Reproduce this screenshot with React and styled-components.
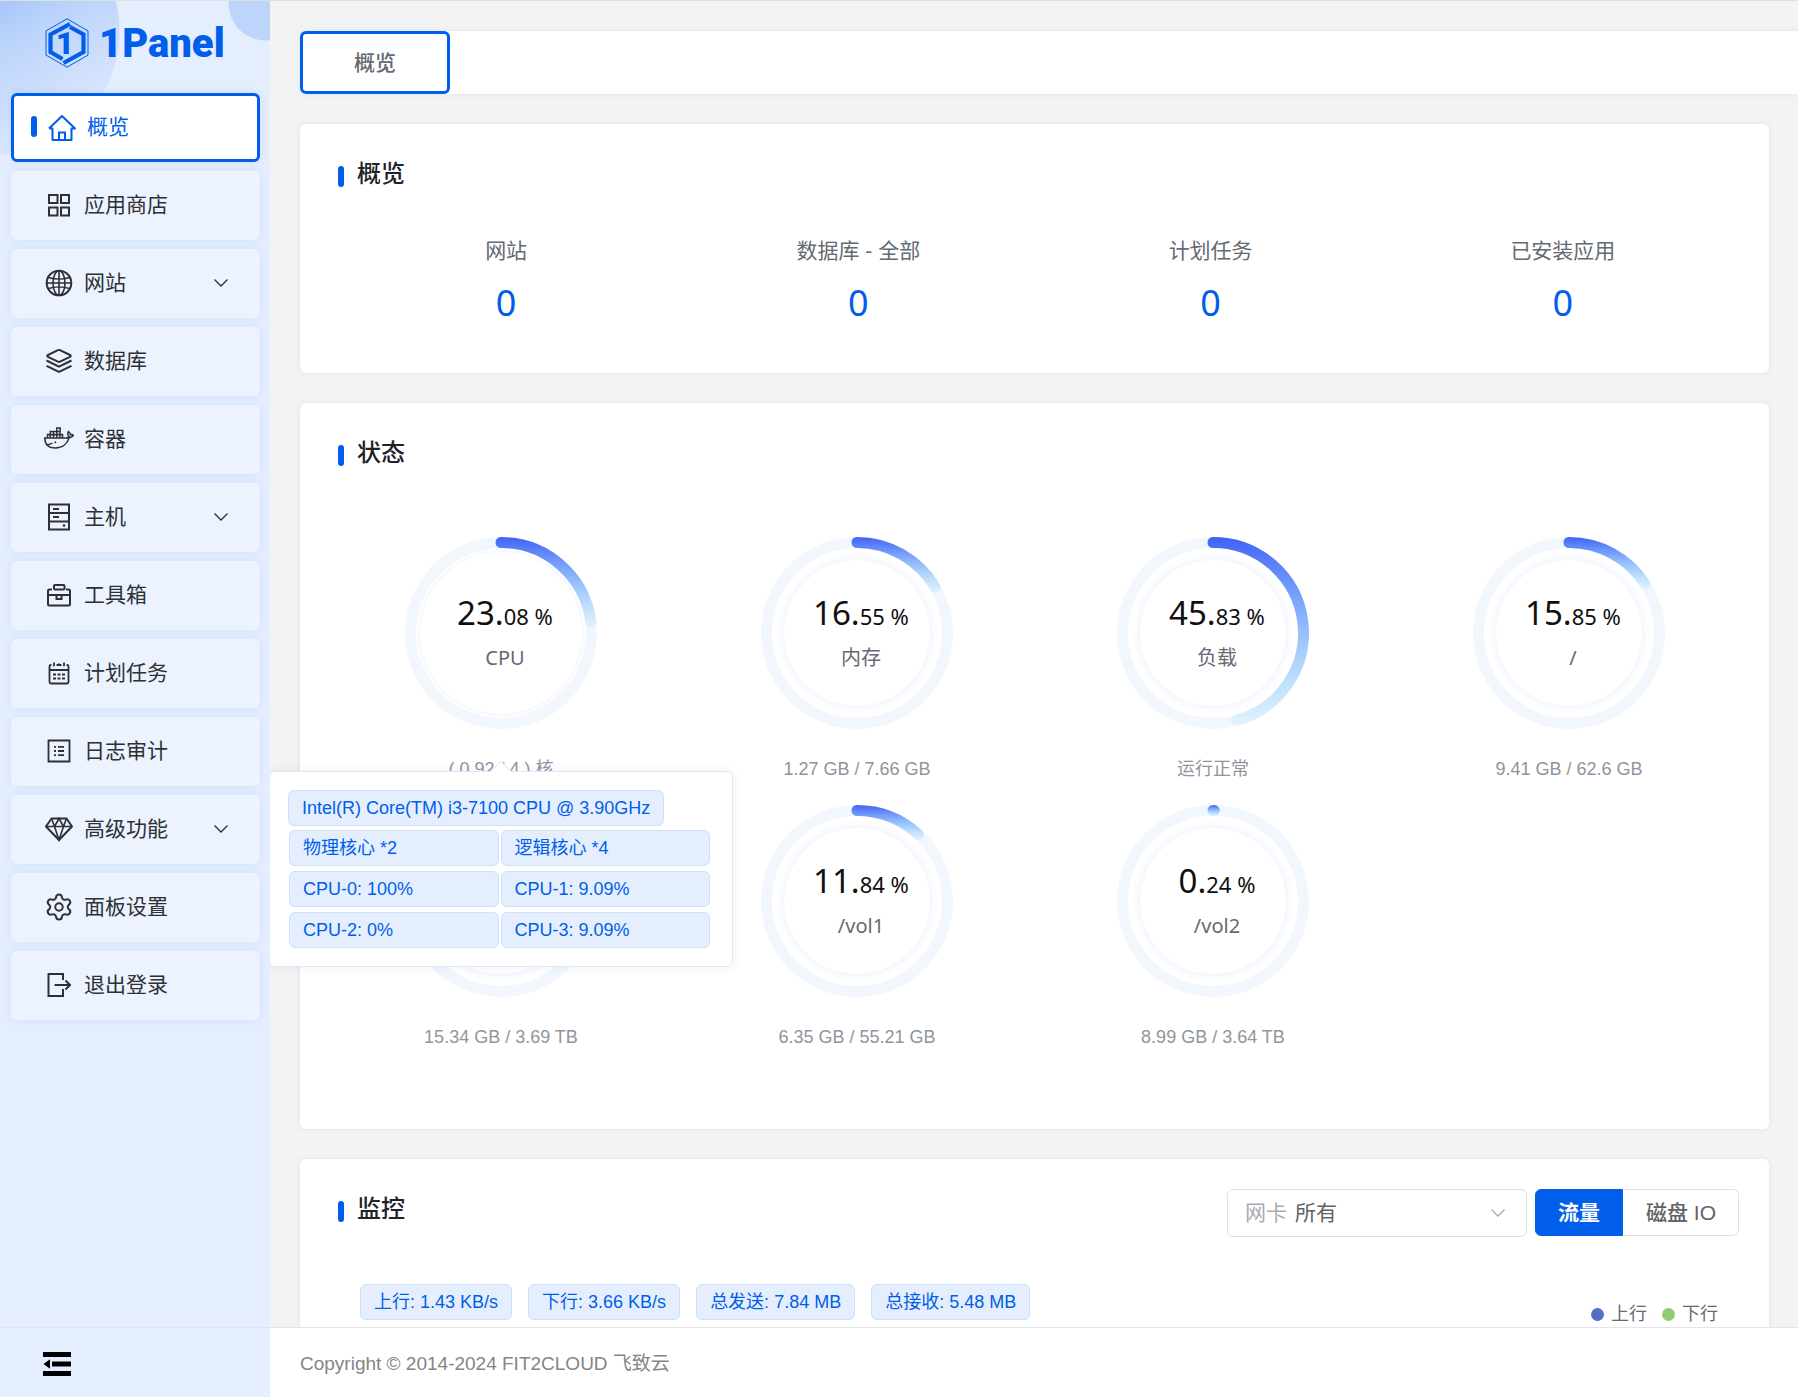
import React, { useState } from 'react';
import styled, { createGlobalStyle, css } from 'styled-components';
import { Settings } from 'lucide-react';

const GlobalStyle = createGlobalStyle`
  :root {
    --primary: #005eeb;
    --tag: #e5eefd;
    --tagBorder: #ccdffb;
    --text: #1f2329;
    --regular: #646a73;
    --muted: #8f959e;
    --line: #e1e4ec;
  }
  * {
    box-sizing: border-box;
  }
  body {
    margin: 0;
    color: var(--text);
    font-family: 'Liberation Sans', 'Noto Sans CJK SC', sans-serif;
    font-size: 18px;
    line-height: 24px;
  }
  button,
  select {
    font-family: inherit;
    line-height: inherit;
  }
`;

/* ---------- icons ---------- */

const IconSvg = ({ children, width = 2 }) => (
  <svg
    width='30'
    height='30'
    viewBox='0 0 30 30'
    fill='none'
    stroke='currentColor'
    strokeWidth={width}
    aria-hidden='true'
  >
    {children}
  </svg>
);

const HomeIcon = () => (
  <IconSvg>
    <path d='M2 16.500 15 4l13 12.500H24.500V28h-19V16.500H2' strokeLinejoin='round' />
    <path d='M12 28v-7.500h6V28' />
  </IconSvg>
);

const AppIcon = () => (
  <IconSvg>
    <path d='M5 5h8.500v8H5zM17 5h8v8h-8zM5 17.500h8.500v8H5zM17 17.500h8v8h-8z' />
  </IconSvg>
);

const GlobeIcon = () => (
  <IconSvg width={1.6}>
    <circle cx='15' cy='15' r='12.300' strokeWidth='2' />
    <ellipse cx='15' cy='15' rx='6' ry='12.300' />
    <path d='M15 2.500v25M2.500 15h25M4.500 9.500c6 2 15 2 21 0M4.500 20.500c6-2 15-2 21 0' />
  </IconSvg>
);

const LayersIcon = () => (
  <IconSvg>
    <path
      d='M14 4.200 4 9c-1 .5-1 1.300 0 1.800l10 4.900c.7.3 1.300.3 2 0l10-4.900c1-.5 1-1.300 0-1.800L16 4.200c-.7-.3-1.300-.3-2 0z'
    />
    <path d='m2.500 14.500 12.500 6.200 12.500-6.200M2.500 19.800 15 26l12.500-6.200' />
  </IconSvg>
);

const DockerIcon = () => (
  <IconSvg width={1.5}>
    <path d='M.8 14h21c1.500 0 2.600-.6 3.200-1.500-1.400-1.500-1.400-3.500-.5-5 1.200.8 1.900 2 2 3.300 1-.3 2-.2 2.800.4-.6 1.500-2 2.300-4 2.300C23.500 19.500 18.500 24 11.500 24 4.500 24 .8 20.500.8 14z' />
    <path d='M3.500 14v-3.500h15V14M6.300 14V7.500h9.700V14M9.500 14V7.500M12.800 14V4h3.400v3.500M3.500 10.700h12.700M2 20.500c2.500.4 4.500 0 6.500-1.500' />
    <circle cx='11.300' cy='18.300' r='1' fill='currentColor' stroke='none' />
  </IconSvg>
);

const HostIcon = () => (
  <IconSvg>
    <path d='M5 2.500h20v25H5zM5 11h20M5 19.500h20M9 7h6M9 15h6' />
    <circle cx='20' cy='23.500' r='1.300' fill='currentColor' stroke='none' />
  </IconSvg>
);

const ToolboxIcon = () => (
  <IconSvg>
    <path d='M8 9.500H5.500A1.500 1.500 0 0 0 4 11v13a1.500 1.500 0 0 0 1.500 1.500h19A1.500 1.500 0 0 0 26 24V11a1.500 1.500 0 0 0-1.500-1.500H22' />
    <rect x='10' y='5' width='10.500' height='4.500' rx='1' />
    <path d='M4 15h22M12.500 15v4h5v-4' />
  </IconSvg>
);

const CalendarIcon = () => (
  <IconSvg width={1.8}>
    <path d='M7.500 7H7a1.500 1.500 0 0 0-1.500 1.500V24A1.500 1.500 0 0 0 7 25.500h16a1.500 1.500 0 0 0 1.500-1.500V8.500A1.500 1.500 0 0 0 23 7h-.5' />
    <path d='M10 4.500v3.800M20 4.500v3.800M12.500 7h5M15 5.500v2.500M5.500 12h19' />
    <path d='M9 16.500h3M13.500 16.500h3M18 16.500h3M9 20.500h3M13.500 20.500h3M18 20.500h3' />
  </IconSvg>
);

const LogIcon = () => (
  <IconSvg width={1.8}>
    <path d='M4.500 4.500h21v21h-21z' />
    <path d='M10 10.800h2M14 10.800h6M10 15h2M14 15h6M10 19.200h2M14 19.200h6' />
  </IconSvg>
);

const DiamondIcon = () => (
  <IconSvg width={1.6}>
    <path d='M7.500 4.500h15l5.500 8L15 26 2 12.500z' strokeWidth='2' strokeLinejoin='round' />
    <path d='M2 12.500h26M7.500 4.500l3 8L15 26l4.500-13.500 3-8M10.500 12.500l4.500-8 4.500 8' />
  </IconSvg>
);

const SettingIcon = () => <Settings size={30} strokeWidth={1.6} aria-hidden='true' />;

const LogoutIcon = () => (
  <IconSvg>
    <path d='M19 10V4H4.500v22H19v-7M10.500 15H26M21.500 10.500 26 15l-4.500 4.500' />
  </IconSvg>
);

const ArrowDown = () => (
  <svg width='16' height='10' viewBox='0 0 16 10' fill='none' stroke='currentColor' aria-hidden='true'>
    <path d='m1.500 1.500 6.500 6.500 6.500-6.500' strokeWidth='1.300' />
  </svg>
);

const FoldIcon = () => (
  <svg width='30' height='26' viewBox='0 0 30 26' aria-hidden='true'>
    <path d='M1 1h28v5H1zM10 10.500h19v5H10zM1 20h28v5H1zM1.500 13 8 8.300v9.400z' />
  </svg>
);

const LogoMark = () => (
  <svg width='44' height='50' viewBox='0 0 44 50' fill='none' stroke='#005eeb' aria-hidden='true'>
    <path d='M22 .8 43 12.900v24.200L22 49.200 1 37.100V12.900z' strokeWidth='1' />
    <path d='M25 6 5.500 16.500V34l12 7M25 9l13.500 7.500V34l-20 11' strokeWidth='4.200' />
    <text
      x='20'
      y='36'
      textAnchor='middle'
      fill='#005eeb'
      stroke='none'
      fontFamily='Roboto, sans-serif'
      fontWeight='900'
      fontSize='31'
    >
      1
    </text>
  </svg>
);

/* ---------- data ---------- */

const menus = [
  { name: '概览', icon: HomeIcon, active: true },
  { name: '应用商店', icon: AppIcon },
  { name: '网站', icon: GlobeIcon, sub: true },
  { name: '数据库', icon: LayersIcon },
  { name: '容器', icon: DockerIcon },
  { name: '主机', icon: HostIcon, sub: true },
  { name: '工具箱', icon: ToolboxIcon },
  { name: '计划任务', icon: CalendarIcon },
  { name: '日志审计', icon: LogIcon },
  { name: '高级功能', icon: DiamondIcon, sub: true },
  { name: '面板设置', icon: SettingIcon },
  { name: '退出登录', icon: LogoutIcon },
];

const stats = [
  { label: '网站', value: 0 },
  { label: '数据库 - 全部', value: 0 },
  { label: '计划任务', value: 0 },
  { label: '已安装应用', value: 0 },
];

const gauges = [
  { id: 'cpu', name: 'CPU', value: 23.08, detail: '( 0.92 / 4 ) 核', hover: true },
  { id: 'memory', name: '内存', value: 16.55, detail: '1.27 GB / 7.66 GB' },
  { id: 'load', name: '负载', value: 45.83, detail: '运行正常' },
  { id: 'root', name: '/', value: 15.85, detail: '9.41 GB / 62.6 GB' },
  { id: 'disk', value: 0, detail: '15.34 GB / 3.69 TB' },
  { id: 'vol1', name: '/vol1', value: 11.84, detail: '6.35 GB / 55.21 GB' },
  { id: 'vol2', name: '/vol2', value: 0.24, detail: '8.99 GB / 3.64 TB' },
];

const cores = ['物理核心 *2', '逻辑核心 *4', 'CPU-0: 100%', 'CPU-1: 9.09%', 'CPU-2: 0%', 'CPU-3: 9.09%'];

const network = ['上行: 1.43 KB/s', '下行: 3.66 KB/s', '总发送: 7.84 MB', '总接收: 5.48 MB'];

/* ---------- components ---------- */

const RADIUS = 90.5;
const STROKE = 11;

const Ring = ({ id, value }) => {
  const angle = (value / 100) * Math.PI * 2;
  const x = 96 + RADIUS * Math.sin(angle);
  const y = 96 - RADIUS * Math.cos(angle);
  return (
    <svg width='192' height='192' viewBox='0 0 192 192' fill='none' aria-hidden='true'>
      <circle cx='96' cy='96' r={RADIUS} stroke='#f2f7fd' strokeWidth={STROKE} />
      {value > 0 && (
        <>
          <defs>
            <linearGradient id={`ring-${id}`} gradientUnits='userSpaceOnUse' x1='0' x2='0' y1='0' y2={y + STROKE / 2}>
              <stop offset='0' stopColor='#4261f6' />
              <stop offset='1' stopColor='#51c0ff' stopOpacity='0.1' />
            </linearGradient>
          </defs>
          <path
            d={`M96 ${96 - RADIUS}A${RADIUS} ${RADIUS} 0 0 1 ${x} ${y}`}
            stroke={`url(#ring-${id})`}
            strokeWidth={STROKE}
            strokeLinecap='round'
          />
        </>
      )}
    </svg>
  );
};

const Gauge = ({ id, name, value, detail, hover }) => {
  const [whole, fraction] = value.toFixed(2).split('.');
  return (
    <GaugeCell>
      <Dial>
        <Ring id={id} value={value} />
        <Disc $large={hover} />
        {name && (
          <Reading>
            <Percent>
              {whole}.<small>{fraction} %</small>
            </Percent>
            <GaugeName>{name}</GaugeName>
          </Reading>
        )}
      </Dial>
      <Detail>{detail}</Detail>
      {hover && (
        <Popover role='tooltip'>
          <Tag>Intel(R) Core(TM) i3-7100 CPU @ 3.90GHz</Tag>
          <Cores>
            {cores.map((core) => (
              <Tag key={core}>{core}</Tag>
            ))}
          </Cores>
        </Popover>
      )}
    </GaugeCell>
  );
};

const Sidebar = () => (
  <Aside>
    <Logo href='#home'>
      <LogoMark />
      1Panel
    </Logo>
    <Menu>
      {menus.map(({ name, icon: Icon, active, sub }) => (
        <MenuItem key={name} href='#menu' $active={active}>
          {active && <Marker />}
          <Icon />
          {name}
          {sub && (
            <MenuArrow>
              <ArrowDown />
            </MenuArrow>
          )}
        </MenuItem>
      ))}
    </Menu>
    <Collapse>
      <FoldButton type='button' aria-label='折叠菜单'>
        <FoldIcon />
      </FoldButton>
    </Collapse>
  </Aside>
);

const Monitor = () => {
  const [mode, setMode] = useState('流量');
  return (
    <Card>
      <CardHeader>
        <Marker $title />
        <Title>监控</Title>
        <Tools>
          <SelectBox>
            <label htmlFor='nic'>网卡</label>
            <select id='nic' defaultValue='all'>
              <option value='all'>所有</option>
            </select>
            <ArrowDown />
          </SelectBox>
          <ButtonGroup>
            {['流量', '磁盘 IO'].map((item) => (
              <ModeButton key={item} type='button' $active={mode === item} onClick={() => setMode(item)}>
                {item}
              </ModeButton>
            ))}
          </ButtonGroup>
        </Tools>
      </CardHeader>
      <MonitorBar>
        <TagRow>
          {network.map((item) => (
            <Tag key={item}>{item}</Tag>
          ))}
        </TagRow>
        <Legend>
          <LegendItem $color='#5470c6'>上行</LegendItem>
          <LegendItem $color='#91cc75'>下行</LegendItem>
        </Legend>
      </MonitorBar>
    </Card>
  );
};

export default function App() {
  return (
    <>
      <GlobalStyle />
      <Layout>
        <Sidebar />
        <Main>
          <Content>
            <TabBar>
              <TabButton type='button'>概览</TabButton>
            </TabBar>
            <Cards>
              <Card>
                <CardHeader>
                  <Marker $title />
                  <Title>概览</Title>
                </CardHeader>
                <Stats>
                  {stats.map(({ label, value }) => (
                    <Stat key={label}>
                      <StatLabel>{label}</StatLabel>
                      <StatValue href='#stat'>{value}</StatValue>
                    </Stat>
                  ))}
                </Stats>
              </Card>
              <Card>
                <CardHeader>
                  <Marker $title />
                  <Title>状态</Title>
                </CardHeader>
                <Gauges>
                  {gauges.map((gauge) => (
                    <Gauge key={gauge.id} {...gauge} />
                  ))}
                </Gauges>
              </Card>
              <Monitor />
            </Cards>
          </Content>
          <Footer>Copyright © 2014-2024 FIT2CLOUD 飞致云</Footer>
        </Main>
      </Layout>
    </>
  );
}

/* ---------- styles ---------- */

const Layout = styled.div`
  display: flex;
  height: 100vh;
  border-top: 1px solid #dfdfdf;
  background: #f3f3f3;
`;

const Aside = styled.aside`
  display: flex;
  flex-direction: column;
  flex: none;
  width: 270px;
  background: radial-gradient(circle at 266px 2px, #bed5fb 37px, transparent 38px),
    radial-gradient(circle at -5px 30px, transparent 124px, #e5eefe 125px),
    linear-gradient(150deg, #a6c6f9 0, #bdd5fb 45px, #cbddfc 90px, #dce9fe 140px, #e5eefe 180px);
`;

const Logo = styled.a`
  display: flex;
  align-items: center;
  gap: 10px;
  height: 84px;
  padding-left: 45px;
  color: var(--primary);
  font: 900 40px Roboto, sans-serif;
  text-decoration: none;
`;

const Menu = styled.nav`
  display: flex;
  flex: 1;
  flex-direction: column;
  gap: 9px;
  padding: 8px 10px 0 11px;
`;

const MenuItem = styled.a`
  display: flex;
  flex: none;
  align-items: center;
  gap: 10px;
  height: 69px;
  padding: 0 31px 2px 33px;
  border-radius: 6px;
  background: #ecf3fe;
  box-shadow: 0 0 8px rgba(0, 94, 235, 0.1);
  color: #2d3136;
  font-size: 21px;
  text-decoration: none;
  ${({ $active }) =>
    $active &&
    css`
      padding-left: 17px;
      border: 3px solid var(--primary);
      background: #fff;
      color: var(--primary);
    `}
`;

const MenuArrow = styled.span`
  display: flex;
  margin-left: auto;
`;

const Marker = styled.span`
  flex: none;
  width: 6px;
  height: 21px;
  margin: ${({ $title }) => ($title ? '12px 13px 0 8px' : '0')};
  border-radius: 3px;
  background: var(--primary);
`;

const Collapse = styled.div`
  display: flex;
  align-items: center;
  height: 70px;
  padding: 2px 0 0 42px;
  border-top: 1px solid var(--line);
`;

const FoldButton = styled.button`
  display: flex;
  padding: 0;
  border: 0;
  background: none;
`;

const Main = styled.main`
  display: flex;
  flex: 1;
  flex-direction: column;
  min-width: 0;
`;

const Content = styled.div`
  flex: 1;
  min-height: 0;
  padding: 30px 0 0 30px;
  overflow: auto;
  scrollbar-width: none;
`;

const TabBar = styled.div`
  height: 63px;
  border-radius: 6px 0 0 6px;
  background: #fff;
  box-shadow: 0 0 6px rgba(0, 94, 235, 0.1);
`;

const TabButton = styled.button`
  width: 150px;
  height: 63px;
  border: 3px solid var(--primary);
  border-radius: 6px;
  background: #fff;
  color: var(--regular);
  font-size: 21px;
  font-weight: 500;
`;

const Cards = styled.div`
  display: flex;
  flex-direction: column;
  gap: 30px;
  padding: 30px 29px 30px 0;
`;

const Card = styled.section`
  padding: 30px 30px 46px;
  border-radius: 6px;
  background: #fff;
  box-shadow: 0 0 6px rgba(0, 94, 235, 0.1);
`;

const CardHeader = styled.header`
  display: flex;
  align-items: flex-start;
`;

const Title = styled.h2`
  margin: 0;
  font-size: 24px;
  font-weight: 500;
  line-height: 40px;
`;

const Stats = styled.div`
  display: grid;
  grid-template-columns: repeat(4, 1fr);
  margin-top: 41px;
`;

const Stat = styled.div`
  display: flex;
  flex-direction: column;
  align-items: center;
  gap: 12px;
`;

const StatLabel = styled.span`
  color: var(--regular);
  font-size: 21px;
  line-height: 32px;
`;

const StatValue = styled.a`
  color: var(--primary);
  font-family: 'Noto Sans', sans-serif;
  font-size: 36px;
  line-height: 48px;
  text-decoration: none;
`;

const Gauges = styled.div`
  display: grid;
  grid-template-columns: repeat(4, 1fr);
  gap: 24px 0;
  margin: 64px -8px 34px -7px;
`;

const GaugeCell = styled.div`
  position: relative;
  display: flex;
  flex-direction: column;
  align-items: center;
  gap: 28px;
`;

const Dial = styled.div`
  display: grid;
  width: 192px;
  height: 192px;

  > * {
    grid-area: 1 / 1;
  }
`;

const Disc = styled.div`
  place-self: center;
  width: ${({ $large }) => ($large ? 162 : 146)}px;
  height: ${({ $large }) => ($large ? 162 : 146)}px;
  border-radius: 50%;
  box-shadow: 0 0 ${({ $large }) => ($large ? 4 : 10)}px rgba(66, 97, 246, 0.12);
`;

const Reading = styled.div`
  display: flex;
  flex-direction: column;
  align-items: center;
  gap: 8px;
  padding: 56px 0 0 8px;
  font-family: 'Noto Sans', 'Noto Sans CJK SC', sans-serif;
`;

const Percent = styled.div`
  color: #0f0f0f;
  font-size: 33px;
  line-height: 40px;

  small {
    font-size: 22px;
  }
`;

const GaugeName = styled.div`
  color: var(--regular);
  font-size: 20px;
  line-height: 28px;
`;

const Detail = styled.div`
  color: var(--muted);
`;

const Popover = styled.div`
  position: absolute;
  z-index: 1;
  top: 234px;
  left: 50%;
  width: 464px;
  padding: 18px;
  border: 1px solid #e4e7f0;
  border-radius: 6px;
  background: #fff;
  box-shadow: 0 0 12px rgba(0, 94, 235, 0.08);
  transform: translateX(-50%);

  &::before {
    position: absolute;
    top: -8px;
    left: 50%;
    width: 14px;
    height: 14px;
    border: 1px solid #e4e7f0;
    border-width: 1px 0 0 1px;
    background: #fff;
    content: '';
    transform: translateX(-50%) rotate(45deg);
  }
`;

const Tag = styled.span`
  display: inline-flex;
  align-items: center;
  height: 36px;
  padding: 0 13px;
  border: 1px solid var(--tagBorder);
  border-radius: 6px;
  background: var(--tag);
  color: var(--primary);
  white-space: nowrap;
  vertical-align: top;
`;

const Cores = styled.div`
  display: grid;
  grid-template-columns: 1fr 1fr;
  gap: 5px 2px;
  margin: 4px 4px 0 1px;
`;

const Tools = styled.div`
  display: flex;
  gap: 8px;
  margin-left: auto;
`;

const SelectBox = styled.div`
  display: flex;
  align-items: center;
  width: 300px;
  height: 48px;
  padding: 0 20px 0 17px;
  border: 1px solid #dcdfe6;
  border-radius: 6px;
  color: #a8abb2;
  font-size: 21px;

  select {
    flex: 1;
    margin-left: 8px;
    padding: 0;
    border: 0;
    background: none;
    color: #606266;
    font-size: 21px;
    appearance: none;
  }
`;

const ButtonGroup = styled.div`
  display: flex;
  height: 47px;
`;

const ModeButton = styled.button`
  padding: 0 22px;
  border: 1px solid #dcdfe6;
  background: #fff;
  color: #606266;
  font-size: 21px;
  font-weight: 500;

  &:first-child {
    border-radius: 6px 0 0 6px;
  }
  &:last-child {
    border-left-color: #fff;
    border-radius: 0 6px 6px 0;
  }
  ${({ $active }) =>
    $active &&
    css`
      border-color: var(--primary);
      background: var(--primary);
      color: #fff;
      font-weight: 700;
    `}
`;

const MonitorBar = styled.div`
  display: flex;
  justify-content: space-between;
  align-items: flex-start;
  margin-top: 47px;
  padding: 0 21px 200px 30px;
`;

const TagRow = styled.div`
  display: flex;
  gap: 16px;
`;

const Legend = styled.div`
  display: flex;
  gap: 15px;
  padding-top: 18px;
`;

const LegendItem = styled.span`
  display: flex;
  align-items: center;
  gap: 7px;
  color: var(--regular);

  &::before {
    width: 13px;
    height: 13px;
    border-radius: 50%;
    background: ${({ $color }) => $color};
    content: '';
  }
`;

const Footer = styled.footer`
  display: flex;
  flex: none;
  align-items: center;
  height: 70px;
  padding: 2px 0 0 30px;
  border-top: 1px solid var(--line);
  background: #fff;
  color: #858585;
  font-size: 19px;
`;
